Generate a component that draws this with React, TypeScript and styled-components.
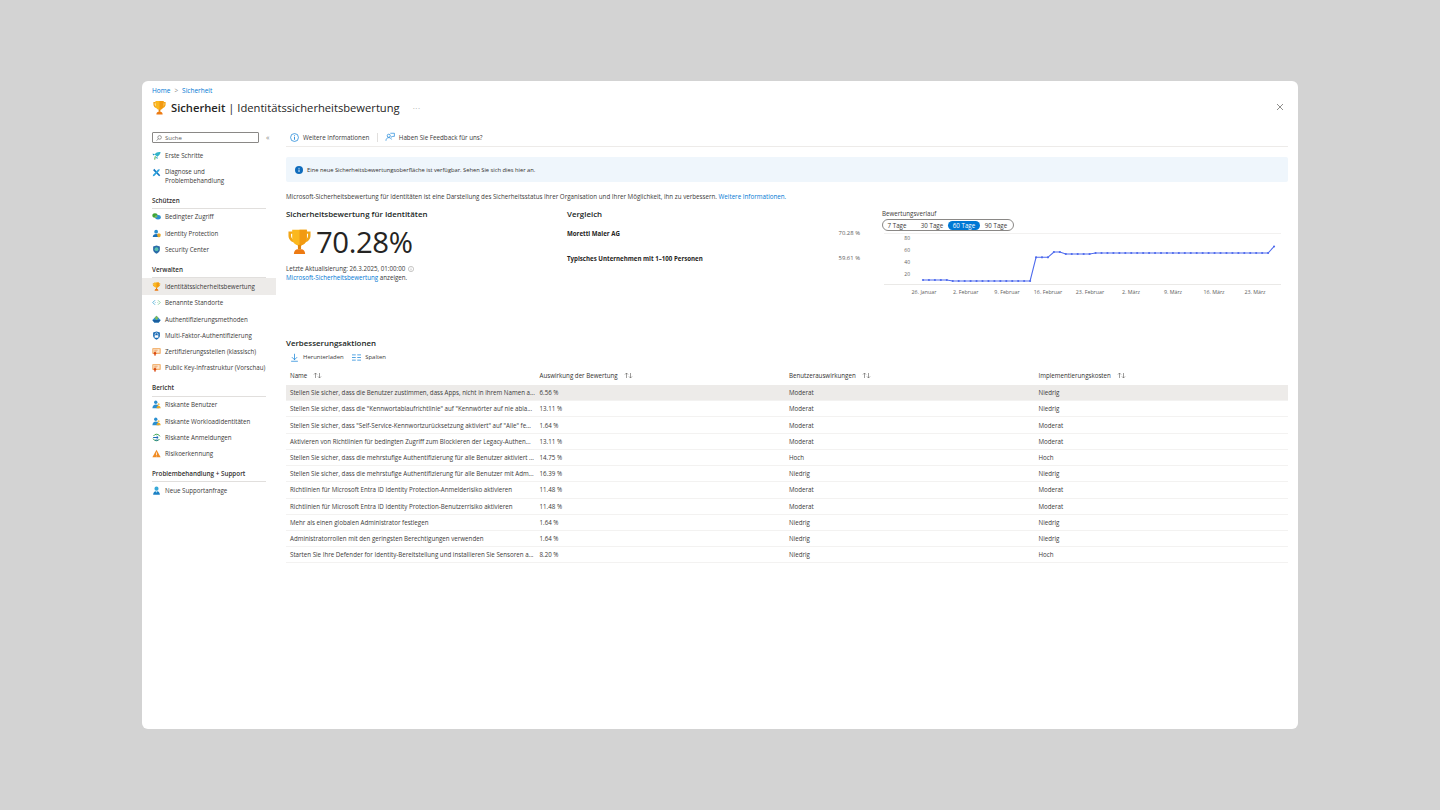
import * as React from "react";
import styled, { createGlobalStyle } from "styled-components";

const GlobalStyle = createGlobalStyle`
  html, body { margin: 0; padding: 0; height: 100%; }
  body { background: #d3d3d3; font-family: "Open Sans", "Noto Sans", sans-serif; color: #323130; }
  * { box-sizing: border-box; }
`;

type IconKind =
  | "rocket" | "tools" | "access" | "identity" | "shield" | "trophy" | "locations"
  | "auth" | "mfa" | "cert" | "users" | "signin" | "warning" | "support";

const Trophy: React.FC<{ size: number }> = ({ size }) => (
  <svg width={size} height={size} viewBox="0 0 24 24">
    <path d="M6 3H2.2v3.6c0 3.4 2.4 6 5.6 6.2l.6-2c-2.3-.2-4-2-4-4.2V5.200h2z" fill="#f2a516" />
    <path d="M18 3h3.800v3.600c0 3.400-2.400 6-5.600 6.200l-.6-2c2.300-.2 4-2 4-4.200V5.200h-2z" fill="#f2a516" />
    <path d="M5.500 1.500h13v7.300c0 3.900-2.900 6.700-6.500 6.700S5.500 12.700 5.500 8.800z" fill="#fbb81e" />
    <path d="M12 1.500h6.500v7.300c0 3.900-2.900 6.700-6.500 6.700z" fill="#f29a12" />
    <rect x="10.600" y="15" width="2.800" height="4" fill="#e2860d" />
    <path d="M7 23c0-2.500 1.500-4.200 3.500-4.200h3c2 0 3.500 1.700 3.500 4.200z" fill="#ed7a12" />
  </svg>
);

const sideIcons: Record<IconKind, React.ReactNode> = {
  rocket: (
    <>
      <path d="M23 3c-7-1-12 1-16 6l7 6c5-3 8-7 9-12z" fill="#32b4c8" />
      <path d="M8 8L1 7l3 5zM14 15l1 6-5-3z" fill="#1b93c4" />
      <path d="M9 14l-2 9" stroke="#5db85c" strokeWidth="3" />
    </>
  ),
  tools: (
    <>
      <path d="M3 6l3-4 16 17-3 3z" fill="#1578c2" />
      <path d="M21 3l-5 1-13 14-1 4 4-1L19 8z" fill="#2ea3dd" />
    </>
  ),
  access: (
    <>
      <ellipse cx="8" cy="9" rx="7" ry="6" fill="#3fa535" />
      <ellipse cx="16" cy="14" rx="7.500" ry="6" fill="#2a8fd0" />
      <ellipse cx="11" cy="12" rx="3.500" ry="3" fill="#7fba5a" />
    </>
  ),
  identity: (
    <>
      <circle cx="11" cy="7" r="5" fill="#2a8fd0" />
      <path d="M2 21c0-5 4-8 9-8s9 3 9 8z" fill="#1b6fb5" />
      <path d="M14 13l4.500-1.500L23 13v4.500c0 2.500-2 4-4.500 5-2.500-1-4.500-2.500-4.500-5z" fill="#e8a727" />
    </>
  ),
  shield: (
    <>
      <path d="M12 1l9 3v8c0 5.500-4 9-9 11-5-2-9-5.500-9-11V4z" fill="#2b6ca8" />
      <circle cx="12" cy="11" r="5" fill="#59c3b1" />
    </>
  ),
  trophy: null,
  locations: (
    <>
      <path d="M8 6l-6 6 6 6" stroke="#59b4d9" strokeWidth="2.600" fill="none" />
      <path d="M16 6l6 6-6 6" stroke="#8fd0a0" strokeWidth="2.600" fill="none" />
      <circle cx="8.500" cy="12" r="1.300" fill="#59b4d9" />
      <circle cx="15.500" cy="12" r="1.300" fill="#8fd0a0" />
    </>
  ),
  auth: (
    <>
      <path d="M12 2l11 11-5 7H6l-5-7z" fill="#2a8fd0" />
      <path d="M12 2l5 6-5 6-5-6z" fill="#7fba5a" />
      <path d="M1 13h22l-5 7H6z" fill="#1a5e9e" />
    </>
  ),
  mfa: (
    <>
      <path d="M12 1l9 3v8c0 5.500-4 9-9 11-5-2-9-5.500-9-11V4z" fill="#1668b3" />
      <path d="M8 11V9a4 4 0 018 0v2" stroke="#fff" strokeWidth="1.800" fill="none" />
      <rect x="7" y="11" width="10" height="7" rx="1" fill="#fff" />
    </>
  ),
  cert: (
    <>
      <rect x="1" y="3" width="22" height="15" rx="1" fill="#ef9f4b" />
      <rect x="3.500" y="5.500" width="17" height="10" fill="#fde7cf" />
      <path d="M6 8.500h9M6 11.500h6" stroke="#e2711d" strokeWidth="1.400" />
      <circle cx="8" cy="17" r="3.500" fill="#d9480f" />
      <path d="M6.500 20l-.5 3.500 2-1 2 1-.5-3.500z" fill="#d9480f" />
    </>
  ),
  users: (
    <>
      <circle cx="10" cy="6" r="4.500" fill="#2a8fd0" />
      <path d="M1 22c0-6 4-10 9-10s9 4 9 10z" fill="#2a8fd0" />
      <path d="M12 22c0-4 2-7 5.500-7s5.500 3 5.500 7z" fill="#e8a727" />
      <circle cx="17.500" cy="11.500" r="3" fill="#f2c14e" />
    </>
  ),
  signin: (
    <>
      <path d="M4 8a9.500 9.500 0 0117 1M20 16a9.500 9.500 0 01-17-1" stroke="#2f9e44" strokeWidth="2.400" fill="none" />
      <path d="M3 12h13" stroke="#1668b3" strokeWidth="2.600" />
      <path d="M12 8l4.500 4-4.500 4" stroke="#1668b3" strokeWidth="2.400" fill="none" />
      <path d="M8 19h9" stroke="#1668b3" strokeWidth="2" />
    </>
  ),
  warning: (
    <>
      <path d="M12 2l11 20H1z" fill="#f08c24" />
      <path d="M12 9v7" stroke="#fff" strokeWidth="2" />
      <circle cx="12" cy="18.600" r="1.200" fill="#fff" />
    </>
  ),
  support: (
    <>
      <circle cx="12" cy="7" r="5.500" fill="#38a9d8" />
      <path d="M3 23c0-6 4-10 9-10s9 4 9 10z" fill="#1b80c4" />
      <path d="M9 13h6l-3 5z" fill="#bfe6f5" />
    </>
  ),
};

const SideIcon: React.FC<{ kind: IconKind }> = ({ kind }) =>
  kind === "trophy" ? (
    <Trophy size={9} />
  ) : (
    <svg width={9} height={9} viewBox="0 0 24 24">
      {sideIcons[kind]}
    </svg>
  );

const Page = styled.div`
  width: 1440px;
  height: 810px;
  padding: 81px 142px;
`;

const Card = styled.div`
  width: 1156px;
  height: 648px;
  background: #fff;
  border-radius: 6px;
  display: flex;
  flex-direction: column;
  overflow: hidden;
`;

const Header = styled.header`
  height: 47px;
  padding: 5px 14px 0 10px;
`;

const Breadcrumb = styled.div`
  display: flex;
  align-items: center;
  gap: 4px;
  height: 9px;
  font-size: 6.500px;
  color: #0078d4;
  span { color: #8a8886; }
`;

const TitleRow = styled.div`
  display: flex;
  align-items: center;
  margin-top: 2px;
  height: 20px;
`;

const Title = styled.h1`
  margin: 0 0 0 4px;
  font-size: 11.200px;
  font-weight: 400;
  white-space: nowrap;
  color: #252423;
  b { font-weight: 600; }
`;

const More = styled.span`
  margin-left: 13px;
  font-size: 8px;
  color: #a19f9d;
  letter-spacing: 0.5px;
`;

const Close = styled.svg`
  margin-left: auto;
`;

const Body = styled.div`
  flex: 1;
  display: flex;
`;

const Sidebar = styled.nav`
  width: 135px;
  flex-shrink: 0;
  padding-top: 4px;
`;

const SearchRow = styled.div`
  display: flex;
  align-items: center;
  padding-left: 10px;
  height: 11px;
  margin-bottom: 4.400px;
`;

const SearchBox = styled.div`
  width: 107px;
  height: 11px;
  border: 1px solid #8a8886;
  border-radius: 1px;
  display: flex;
  align-items: center;
  gap: 3px;
  padding-left: 3px;
  font-size: 6px;
  color: #605e5c;
`;

const Collapse = styled.span`
  margin-left: 7px;
  font-size: 7px;
  color: #8a8886;
`;

const Item = styled.div<{ $active?: boolean; $tall?: boolean }>`
  display: flex;
  align-items: ${(p) => (p.$tall ? "flex-start" : "center")};
  gap: 4px;
  width: 134px;
  min-height: ${(p) => (p.$tall ? "24.400px" : "16.250px")};
  padding: ${(p) => (p.$tall ? "3px 0 0 10px" : "0 0 0 10px")};
  font-size: 6.200px;
  line-height: 9px;
  color: #3b3a39;
  white-space: nowrap;
  background: ${(p) => (p.$active ? "#edebe9" : "transparent")};
  svg { flex-shrink: 0; margin-top: ${(p) => (p.$tall ? "1px" : "0")}; }
`;

const Group = styled.div`
  width: 114px;
  height: 20.800px;
  margin-left: 10px;
  padding-top: 7.500px;
  border-bottom: 1px solid #e1dfdd;
  font-size: 6.300px;
  line-height: 9px;
  font-weight: 600;
  color: #323130;
  white-space: nowrap;
`;

const Main = styled.main`
  flex: 1;
  padding: 0 10px 0 9px;
  min-width: 0;
`;

const Toolbar = styled.div`
  display: flex;
  align-items: center;
  height: 19px;
  padding: 0 0 0 4px;
  border-bottom: 1px solid #edebe9;
`;

const ToolButton = styled.div`
  display: flex;
  align-items: center;
  gap: 4px;
  font-size: 6.250px;
  color: #3b3a39;
  white-space: nowrap;
`;

const ActionButton = styled(ToolButton)`
  font-size: 5.950px;
`;

const ToolDivider = styled.span`
  width: 1px;
  height: 9px;
  margin: 0 7px 0 7.500px;
  background: #e1dfdd;
`;

const Banner = styled.div`
  display: flex;
  align-items: center;
  gap: 4px;
  height: 25px;
  margin-top: 10px;
  padding-left: 9px;
  border-radius: 2px;
  background: #eff6fc;
  font-size: 5.750px;
  color: #323130;
  b { font-weight: 500; }
`;

const Intro = styled.p`
  margin: 10px 0 0;
  height: 9px;
  font-size: 6.220px;
  line-height: 9px;
  color: #3b3a39;
  white-space: nowrap;
  a { color: #0078d4; }
`;

const Overview = styled.section`
  display: grid;
  grid-template-columns: 259px 293px 1fr;
  column-gap: 22px;
  margin-top: 7.500px;
  height: 129.500px;
`;

const SectionTitle = styled.h2`
  margin: 0;
  height: 11px;
  font-size: 7.900px;
  line-height: 11px;
  font-weight: 600;
  color: #201f1e;
  white-space: nowrap;
`;

const ScoreRow = styled.div`
  display: flex;
  align-items: center;
  height: 28px;
  margin-top: 8px;
  gap: 3px;
`;

const ScoreValue = styled.span`
  font-size: 29.300px;
  line-height: 28px;
  color: #252423;
  letter-spacing: -0.4px;
`;

const ScoreNote = styled.p`
  margin: 8.500px 0 0;
  font-size: 6.200px;
  line-height: 9.300px;
  color: #3b3a39;
  white-space: nowrap;
  display: flex;
  flex-wrap: wrap;
  align-items: center;
  gap: 0 3px;
  a { color: #0078d4; }
`;

const NoteBreak = styled.span`
  flex-basis: 100%;
  height: 0;
`;

const CompareRow = styled.div<{ $gap: number }>`
  display: flex;
  justify-content: space-between;
  margin-top: ${(p) => p.$gap}px;
  height: 9px;
  font-size: 6.150px;
  line-height: 9px;
  b { font-weight: 700; color: #252423; }
  span { color: #605e5c; font-size: 5.900px; }
`;

const ChartLabel = styled.div`
  height: 10px;
  font-size: 6.200px;
  line-height: 9px;
  color: #3b3a39;
`;

const Segmented = styled.div`
  display: grid;
  grid-template-columns: repeat(4, 1fr);
  align-items: center;
  width: 132px;
  height: 12px;
  margin: 0.500px 0 1px;
  padding: 0 1px;
  border: 1px solid #8a8886;
  border-radius: 6px;
`;

const Segment = styled.span<{ $active?: boolean; $inset?: number }>`
  height: 9px;
  padding-right: ${(p) => p.$inset ?? 0}px;
  border-radius: 5px;
  text-align: center;
  font-size: 6.200px;
  line-height: 9px;
  white-space: nowrap;
  color: ${(p) => (p.$active ? "#fff" : "#3b3a39")};
  background: ${(p) => (p.$active ? "#0078d4" : "transparent")};
`;

const ActionBar = styled.div`
  display: flex;
  align-items: center;
  gap: 8.500px;
  height: 14px;
  margin: 1px 0 1px;
  padding-left: 4px;
`;

const TableRow = styled.div<{ $head?: boolean; $active?: boolean }>`
  display: grid;
  grid-template-columns: 249.500px 249.500px 249.500px 1fr;
  align-items: center;
  height: ${(p) => (p.$head ? "20px" : "16.220px")};
  padding-left: 4px;
  font-size: 6.200px;
  white-space: nowrap;
  color: #3b3a39;
  background: ${(p) => (p.$active ? "#edebe9" : "transparent")};
  border-bottom: ${(p) => (p.$head ? "none" : "1px solid #f3f2f1")};
`;

const HeadCell = styled.div`
  display: flex;
  align-items: center;
  gap: 6px;
  font-weight: 500;
  color: #323130;
`;

const Sort = () => (
  <svg width="9" height="7" viewBox="0 0 9 7">
    <path d="M2.500 6V1M1 2.500l1.500-1.500L4 2.500" stroke="#605e5c" strokeWidth="0.600" fill="none" />
    <path d="M6.500 1v5M5 4.500L6.500 6 8 4.500" stroke="#605e5c" strokeWidth="0.600" fill="none" />
  </svg>
);

const InfoCircle: React.FC<{ size: number; color: string }> = ({ size, color }) => (
  <svg width={size} height={size} viewBox="0 0 16 16">
    <circle cx="8" cy="8" r="7" fill="none" stroke={color} strokeWidth="1.200" />
    <path d="M8 7v5" stroke={color} strokeWidth="1.400" />
    <circle cx="8" cy="4.800" r="0.900" fill={color} />
  </svg>
);

const sideTop: { label: string; icon: IconKind }[] = [{ label: "Erste Schritte", icon: "rocket" }];

const sideGroups: { title: string; items: { label: string; icon: IconKind; active?: boolean }[] }[] = [
  {
    title: "Schützen",
    items: [
      { label: "Bedingter Zugriff", icon: "access" },
      { label: "Identity Protection", icon: "identity" },
      { label: "Security Center", icon: "shield" },
    ],
  },
  {
    title: "Verwalten",
    items: [
      { label: "Identitätssicherheitsbewertung", icon: "trophy", active: true },
      { label: "Benannte Standorte", icon: "locations" },
      { label: "Authentifizierungsmethoden", icon: "auth" },
      { label: "Multi-Faktor-Authentifizierung", icon: "mfa" },
      { label: "Zertifizierungsstellen (klassisch)", icon: "cert" },
      { label: "Public Key-Infrastruktur (Vorschau)", icon: "cert" },
    ],
  },
  {
    title: "Bericht",
    items: [
      { label: "Riskante Benutzer", icon: "users" },
      { label: "Riskante Workloadidentitäten", icon: "users" },
      { label: "Riskante Anmeldungen", icon: "signin" },
      { label: "Risikoerkennung", icon: "warning" },
    ],
  },
  {
    title: "Problembehandlung + Support",
    items: [{ label: "Neue Supportanfrage", icon: "support" }],
  },
];

const rows = [
  ["Stellen Sie sicher, dass die Benutzer zustimmen, dass Apps, nicht in ihrem Namen a...", "6.56 %", "Moderat", "Niedrig"],
  ["Stellen Sie sicher, dass die \"Kennwortablaufrichtlinie\" auf \"Kennwörter auf nie abla...", "13.11 %", "Moderat", "Niedrig"],
  ["Stellen Sie sicher, dass \"Self-Service-Kennwortzurücksetzung aktiviert\" auf \"Alle\" fe...", "1.64 %", "Moderat", "Moderat"],
  ["Aktivieren von Richtlinien für bedingten Zugriff zum Blockieren der Legacy-Authen...", "13.11 %", "Moderat", "Moderat"],
  ["Stellen Sie sicher, dass die mehrstufige Authentifizierung für alle Benutzer aktiviert ...", "14.75 %", "Hoch", "Hoch"],
  ["Stellen Sie sicher, dass die mehrstufige Authentifizierung für alle Benutzer mit Adm...", "16.39 %", "Niedrig", "Niedrig"],
  ["Richtlinien für Microsoft Entra ID Identity Protection-Anmelderisiko aktivieren", "11.48 %", "Moderat", "Moderat"],
  ["Richtlinien für Microsoft Entra ID Identity Protection-Benutzerrisiko aktivieren", "11.48 %", "Moderat", "Moderat"],
  ["Mehr als einen globalen Administrator festlegen", "1.64 %", "Niedrig", "Niedrig"],
  ["Administratorrollen mit den geringsten Berechtigungen verwenden", "1.64 %", "Niedrig", "Niedrig"],
  ["Starten Sie Ihre Defender for Identity-Bereitstellung und installieren Sie Sensoren a...", "8.20 %", "Niedrig", "Hoch"],
];

// history values as pixel y in the chart, one point per day
const chartYs = [
  ...Array(5).fill(48),
  ...Array(14).fill(49),
  25.3, 25.3, 25.3, 20, 20,
  ...Array(5).fill(22),
  ...Array(30).fill(21),
  14.5,
];

const xTicks = [
  ["26. Januar", 42], ["2. Februar", 83.7], ["9. Februar", 125], ["16. Februar", 166], ["23. Februar", 208],
  ["2. März", 249], ["9. März", 291], ["16. März", 332], ["23. März", 373],
] as const;

const HistoryChart = () => {
  const pts = chartYs.map((y, i) => [41 + i * 5.95, y] as const);
  return (
    <svg width="406" height="66" viewBox="0 0 406 66" style={{ display: "block" }}>
      <line x1="2" x2="399" y1="1.500" y2="1.500" stroke="#edebe9" strokeWidth="0.700" />
      <line x1="2" x2="399" y1="52.500" y2="52.500" stroke="#e1dfdd" strokeWidth="0.700" />
      {[["80", 6], ["60", 18], ["40", 30], ["20", 42]].map(([t, y]) => (
        <text key={t} x="28" y={Number(y) + 2} fontSize="5" textAnchor="end" fill="#605e5c">{t}</text>
      ))}
      {xTicks.map(([t, x]) => (
        <text key={t} x={x} y="62" fontSize="5.300" textAnchor="middle" fill="#605e5c">{t}</text>
      ))}
      <polyline points={pts.map((p) => p.join(",")).join(" ")} fill="none" stroke="#4f6bed" strokeWidth="1.100" />
      {pts.map((p, i) => (
        <circle key={i} cx={p[0]} cy={p[1]} r="1.100" fill="#4f6bed" />
      ))}
    </svg>
  );
};

export default function App() {
  return (
    <Page>
      <GlobalStyle />
      <Card>
        <Header>
          <Breadcrumb>
            Home <span>&gt;</span> Sicherheit
          </Breadcrumb>
          <TitleRow>
            <Trophy size={15} />
            <Title>
              <b>Sicherheit</b> | Identitätssicherheitsbewertung
            </Title>
            <More>···</More>
            <Close width="8" height="8" viewBox="0 0 8 8">
              <path d="M1 1l6 6M7 1L1 7" stroke="#605e5c" strokeWidth="0.700" />
            </Close>
          </TitleRow>
        </Header>
        <Body>
          <Sidebar>
            <SearchRow>
              <SearchBox>
                <svg width="6" height="6" viewBox="0 0 10 10">
                  <circle cx="6" cy="4" r="3" fill="none" stroke="#605e5c" />
                  <path d="M4 6.200L1 9.500" stroke="#605e5c" />
                </svg>
                Suche
              </SearchBox>
              <Collapse>«</Collapse>
            </SearchRow>
            {sideTop.map((it) => (
              <Item key={it.label}>
                <SideIcon kind={it.icon} />
                {it.label}
              </Item>
            ))}
            <Item $tall>
              <SideIcon kind="tools" />
              <span>
                Diagnose und
                <br />
                Problembehandlung
              </span>
            </Item>
            {sideGroups.map((g) => (
              <React.Fragment key={g.title}>
                <Group>{g.title}</Group>
                {g.items.map((it) => (
                  <Item key={it.label} $active={it.active}>
                    <SideIcon kind={it.icon} />
                    {it.label}
                  </Item>
                ))}
              </React.Fragment>
            ))}
          </Sidebar>
          <Main>
            <Toolbar>
              <ToolButton>
                <InfoCircle size={9} color="#0078d4" />
                Weitere Informationen
              </ToolButton>
              <ToolDivider />
              <ToolButton>
                <svg width="10" height="10" viewBox="0 0 16 16" fill="none" stroke="#0078d4" strokeWidth="1">
                  <circle cx="6" cy="6" r="2.500" />
                  <path d="M1.500 14c0-3 2-5 4.500-5s4 1.500 4.500 3" />
                  <path d="M8.500 2h6.500v5h-3l-1.500 1.500V7" />
                </svg>
                Haben Sie Feedback für uns?
              </ToolButton>
            </Toolbar>
            <Banner>
              <svg width="8" height="8" viewBox="0 0 16 16">
                <circle cx="8" cy="8" r="8" fill="#0f6cbd" />
                <path d="M8 7v5" stroke="#fff" strokeWidth="1.800" />
                <circle cx="8" cy="4.500" r="1.100" fill="#fff" />
              </svg>
              <span>
                Eine neue Sicherheitsbewertungsoberfläche ist verfügbar. <b>Sehen Sie sich dies hier an.</b>
              </span>
            </Banner>
            <Intro>
              Microsoft-Sicherheitsbewertung für Identitäten ist eine Darstellung des Sicherheitsstatus Ihrer Organisation und Ihrer Möglichkeit, ihn zu verbessern.{" "}
              <a>Weitere Informationen.</a>
            </Intro>
            <Overview>
              <div>
                <SectionTitle>Sicherheitsbewertung für Identitäten</SectionTitle>
                <ScoreRow>
                  <Trophy size={27} />
                  <ScoreValue>70.28%</ScoreValue>
                </ScoreRow>
                <ScoreNote>
                  Letzte Aktualisierung: 26.3.2025, 01:00:00
                  <InfoCircle size={6} color="#8a8886" />
                  <NoteBreak />
                  <span>
                    <a>Microsoft-Sicherheitsbewertung</a> anzeigen.
                  </span>
                </ScoreNote>
              </div>
              <div>
                <SectionTitle>Vergleich</SectionTitle>
                <CompareRow $gap={9}>
                  <b>Moretti Maler AG</b>
                  <span>70.28 %</span>
                </CompareRow>
                <CompareRow $gap={16.500}>
                  <b>Typisches Unternehmen mit 1–100 Personen</b>
                  <span>59.61 %</span>
                </CompareRow>
              </div>
              <div>
                <ChartLabel>Bewertungsverlauf</ChartLabel>
                <Segmented>
                  <Segment $inset={6}>7 Tage</Segment>
                  <Segment>30 Tage</Segment>
                  <Segment $active>60 Tage</Segment>
                  <Segment>90 Tage</Segment>
                </Segmented>
                <HistoryChart />
              </div>
            </Overview>
            <section>
              <SectionTitle>Verbesserungsaktionen</SectionTitle>
              <ActionBar>
                <ActionButton>
                  <svg width="9" height="9" viewBox="0 0 12 12" fill="none" stroke="#0078d4" strokeWidth="0.900">
                    <path d="M6 1v8M2.500 5.500L6 9l3.500-3.500M1.500 11h9" />
                  </svg>
                  Herunterladen
                </ActionButton>
                <ActionButton>
                  <svg width="9" height="7" viewBox="0 0 12 9" fill="none" stroke="#0078d4" strokeWidth="0.900">
                    <path d="M0 1h5M0 4.500h5M0 8h5M7 1h5M7 4.500h5M7 8h5" />
                  </svg>
                  Spalten
                </ActionButton>
              </ActionBar>
              <TableRow $head>
                {["Name", "Auswirkung der Bewertung", "Benutzerauswirkungen", "Implementierungskosten"].map((h) => (
                  <HeadCell key={h}>
                    {h}
                    <Sort />
                  </HeadCell>
                ))}
              </TableRow>
              {rows.map((r, i) => (
                <TableRow key={i} $active={i === 0}>
                  {r.map((c, j) => (
                    <div key={j}>{c}</div>
                  ))}
                </TableRow>
              ))}
            </section>
          </Main>
        </Body>
      </Card>
    </Page>
  );
}
